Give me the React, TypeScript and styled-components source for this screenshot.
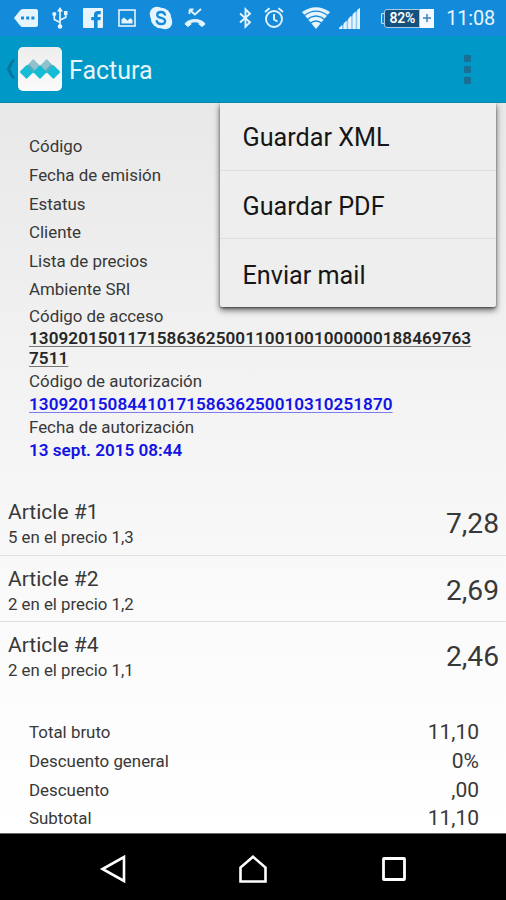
import React from 'react';
import styled, { createGlobalStyle } from 'styled-components';

const GlobalStyle = createGlobalStyle`
  *, *::before, *::after { box-sizing: border-box; }
  body { margin: 0; font-family: Roboto, "Liberation Sans", sans-serif; }
`;

const Screen = styled.div`
  width: 506px;
  height: 900px;
  display: flex;
  flex-direction: column;
  overflow: hidden;
  color: #383838;
`;

const StatusBar = styled.header`
  height: 36px;
  flex: none;
  display: flex;
  align-items: center;
  justify-content: space-between;
  padding: 0 11px 0 14px;
  background: #148bda;
`;

const StatusGroup = styled.div`
  display: flex;
  align-items: center;
`;

const Glyph = styled.svg<{ $gap?: number }>`
  display: block;
  flex: none;
  margin-left: ${({ $gap }) => $gap ?? 0}px;
  overflow: visible;
`;

const Battery = styled.div`
  display: flex;
  align-items: center;
  margin-left: 21px;
`;

const BatteryTip = styled.span`
  width: 3px;
  height: 11px;
  border: 1.5px solid #cfe6f8;
  border-right: 0;
  border-radius: 2px 0 0 2px;
`;

const BatteryLevel = styled.span`
  width: 36px;
  height: 19px;
  border: 1.5px solid #a9cbe6;
  border-radius: 3px 0 0 3px;
  background: #15517f;
  color: #fff;
  font-size: 14px;
  font-weight: 600;
  line-height: 16.5px;
  text-align: center;
  letter-spacing: -0.3px;
`;

const BatteryPlus = styled.span`
  width: 14px;
  height: 19px;
  display: grid;
  place-items: center;
  background: #f4faff;
`;

const Clock = styled.time`
  margin-left: 12px;
  padding-top: 2px;
  font-size: 19.9px;
  line-height: 34px;
  letter-spacing: -0.15px;
  color: #e9f4fc;
`;

const ActionBar = styled.div`
  height: 67px;
  flex: none;
  display: flex;
  align-items: center;
  padding: 0 35px 0 7px;
  background: #0098c6;
  border-bottom: 1px solid #0b86ab;
`;

const AppIcon = styled.div`
  width: 44px;
  height: 44px;
  margin-left: 2px;
  display: grid;
  place-items: center;
  border-radius: 5px;
  background: linear-gradient(#ededed, #fbfbfb);
`;

const Title = styled.h1`
  flex: 1;
  margin: 0 0 0 7px;
  padding-top: 3px;
  font-size: 25px;
  font-weight: 400;
  line-height: 40px;
  color: #e6f5fa;
`;

const Overflow = styled.div`
  width: 7px;
  display: flex;
  flex-direction: column;
  gap: 4px;
`;

const Dot = styled.span`
  height: 7px;
  border-radius: 1px;
  background: #1a6f95;
`;

const Body = styled.main`
  flex: 1;
  min-height: 0;
  position: relative;
  padding-top: 29.4px;
  background: linear-gradient(#e8e8e8 0%, #f1f1f1 32%, #fafafa 68%, #ffffff 100%);
`;

const Menu = styled.nav`
  position: absolute;
  top: 0;
  left: 220px;
  width: 275.5px;
  height: 204px;
  display: flex;
  flex-direction: column;
  background: #eeeeee;
  border-radius: 0 0 2px 2px;
  box-shadow: 0 3px 6px rgba(0, 0, 0, 0.62), 0 1px 2px rgba(0, 0, 0, 0.4);
  clip-path: inset(0 -14px -16px -14px);
`;

const MenuItem = styled.div`
  flex: 1;
  display: flex;
  align-items: center;
  padding: 3px 0 0 22.5px;
  font-size: 25.2px;
  color: #161616;
  & + & {
    padding-top: 4px;
    border-top: 1px solid #dfdfdf;
  }
`;

const Fields = styled.section`
  padding: 0 29px;
`;

const Row = styled.div`
  display: flex;
  align-items: center;
  justify-content: space-between;
  height: 28.6px;
`;

const Stack = styled.div`
  padding-top: 0.7px;
`;

const Label = styled.span<{ $stacked?: boolean }>`
  display: block;
  font-size: 16.9px;
  line-height: ${({ $stacked }) => ($stacked ? '23.5px' : '28.6px')};
`;

const Code = styled.div<{ $tone: string; $line?: string }>`
  margin: 1px 0 2px;
  font-size: 17.1px;
  font-weight: 600;
  line-height: 19.5px;
  letter-spacing: ${({ $line }) => ($line ? '0.06px' : '0')};
  color: ${({ $tone }) => $tone};
  text-decoration: ${({ $line }) => ($line ? `underline 1px ${$line}` : 'none')};
  text-underline-offset: 2px;
  text-decoration-skip-ink: none;
`;

const Articles = styled.section`
  margin-top: 27.9px;
`;

const Article = styled.article`
  height: 66.7px;
  display: flex;
  align-items: center;
  justify-content: space-between;
  padding: 5px 7px 0 8px;
  & + & {
    padding-top: 4px;
    border-top: 1px solid #e0e0e0;
  }
`;

const ArticleName = styled.div`
  padding-top: 1px;
  font-size: 21px;
  line-height: 26px;
`;

const ArticleDetail = styled.div`
  font-size: 16.8px;
  line-height: 25px;
`;

const Price = styled.div`
  font-size: 28.2px;
  line-height: 34px;
`;

const Totals = styled.section`
  margin-top: 30.3px;
  padding: 0 27px 0 29px;
`;

const Amount = styled.span`
  font-size: 21px;
  line-height: 28.6px;
`;

const NavBar = styled.footer`
  height: 67px;
  flex: none;
  display: flex;
  align-items: center;
  padding: 4px 0 0 100px;
  border-top: 1px solid #6a6a6a;
  background: #000;
`;

const fields = ['Código', 'Fecha de emisión', 'Estatus', 'Cliente', 'Lista de precios', 'Ambiente SRI'];

const articles = [
  { name: 'Article #1', detail: '5 en el precio 1,3', price: '7,28' },
  { name: 'Article #2', detail: '2 en el precio 1,2', price: '2,69' },
  { name: 'Article #4', detail: '2 en el precio 1,1', price: '2,46' },
];

const totals = [
  ['Total bruto', '11,10'],
  ['Descuento general', '0%'],
  ['Descuento', ',00'],
  ['Subtotal', '11,10'],
];

const ink = '#e6f4fd';

export default function App() {
  return (
    <Screen>
      <GlobalStyle />
      <StatusBar>
        <StatusGroup>
          <Glyph width="24" height="18" viewBox="0 0 24 18">
            <path d="M0 9 6 1.5Q7 0 9 0H22Q24 0 24 2V16Q24 18 22 18H9Q7 18 6 16.5Z" fill={ink} />
            <path d="M7 7.5h3v3H7zM12.200 7.500h3v3h-3zM17.400 7.500h3v3h-3z" fill="#148bda" />
          </Glyph>
          <Glyph $gap={14} width="16" height="22" viewBox="0 0 16 22">
            <g fill="none" stroke={ink} strokeWidth="1.7">
              <path d="M8 3v16M8 15.500 2.300 12.500V8M8 13l5.700-2.500V6" />
            </g>
            <path d="M8 0l3 4.500H5zM12 4h3.500v4H12z" fill={ink} />
            <circle cx="2.300" cy="7" r="2.100" fill={ink} />
            <circle cx="8" cy="19.500" r="2.300" fill={ink} />
          </Glyph>
          <Glyph $gap={15} width="20" height="20" viewBox="0 0 20 20">
            <rect width="20" height="20" rx="1" fill={ink} />
            <path d="M11 20V12.300H8.300V9H11V6.800Q11 3 15 3h2.800v3.200H16Q14.600 6.200 14.600 7.600V9h3.200l-.5 3.300h-2.700V20Z" fill="#148bda" />
          </Glyph>
          <Glyph $gap={15} width="18" height="18" viewBox="0 0 18 18">
            <rect x="1" y="1" width="16" height="16" fill="none" stroke={ink} strokeWidth="1.600" />
            <path d="M3.500 14.500V10.500L6 8.500l3.500 3L12.500 9l2 2v3.500Z" fill={ink} />
          </Glyph>
          <Glyph $gap={13} width="24" height="24" viewBox="0 0 24 24">
            <circle cx="8" cy="8" r="7.300" fill={ink} />
            <circle cx="16" cy="16" r="7.300" fill={ink} />
            <circle cx="12" cy="12" r="10.300" fill={ink} />
            <path d="M16 8.600C15.300 6.700 13.800 6 12 6 9.800 6 8.200 7.100 8.200 8.900c0 4 7.900 2 7.900 6 0 2-1.700 3.100-4.100 3.100-2.300 0-3.800-1-4.300-3" fill="none" stroke="#148bda" strokeWidth="2.300" strokeLinecap="round" />
          </Glyph>
          <Glyph $gap={11} width="22" height="20" viewBox="0 0 22 20">
            <path d="M5.500 1.500V6M5.500 1.500H9.500M6 2l4.800 4.500L17 1" fill="none" stroke={ink} strokeWidth="1.800" />
            <path d="M.9 15.800Q4.500 11.600 11 11.600T21.100 15.800L18.300 18.600 15.100 16.400V14.300Q11 13.300 6.900 14.300V16.400L3.700 18.600Z" fill={ink} stroke={ink} strokeWidth="1" strokeLinejoin="round" />
          </Glyph>
        </StatusGroup>
        <StatusGroup>
          <Glyph width="13" height="20" viewBox="0 0 13 20">
            <path d="M1 5.500 11 14.200 6.500 18.700V1.300L11 5.800 1 14.500" fill="none" stroke={ink} strokeWidth="1.900" />
          </Glyph>
          <Glyph $gap={12} width="20" height="22" viewBox="0 0 20 22">
            <g fill="none" stroke={ink} strokeWidth="1.900">
              <circle cx="10" cy="12" r="8" />
              <path d="M10 7v5.500l3.500 2M1 5l4.500-3.700M19 5l-4.500-3.700" />
            </g>
          </Glyph>
          <Glyph $gap={18} width="28" height="22" viewBox="0 0 28 22">
            <path d="M0 5Q14-4.500 28 5L14 22Z" fill={ink} />
            <path d="M2 8.800Q14-.5 26 8.800M5 12.600Q14 5.500 23 12.600M8 16.400Q14 11.500 20 16.400" fill="none" stroke="#148bda" strokeWidth="1.400" />
          </Glyph>
          <Glyph $gap={9} width="21" height="21" viewBox="0 0 21 21">
            <path d="M0 21 21 0V21Z" fill="#8cc5ef" />
            <path d="M0 21v-1l3-3v4ZM4.600 21v-5.600l3-3V21ZM9.200 21V10.800l3-3V21ZM13.700 21V6.300l3-3V21ZM18.200 21V1.800L21 0v21Z" fill={ink} />
          </Glyph>
          <Battery>
            <BatteryTip />
            <BatteryLevel>82%</BatteryLevel>
            <BatteryPlus>
              <svg width="8" height="8" viewBox="0 0 8 8">
                <path d="M4 0v8M0 4h8" stroke="#3583bd" strokeWidth="1.500" />
              </svg>
            </BatteryPlus>
          </Battery>
          <Clock>11:08</Clock>
        </StatusGroup>
      </StatusBar>

      <ActionBar>
        <Glyph width="9" height="20" viewBox="0 0 9 20">
          <path d="M7.500 1Q5.500 1.500 4.500 4L1.500 10l3 6q1 2.500 3 3" fill="none" stroke="#08749b" strokeWidth="2.800" />
        </Glyph>
        <AppIcon>
          <svg width="40" height="20" viewBox="0 0 40 20">
            <path d="M13.300 0 20.500 7.200 13.300 14.400 6.100 7.200ZM26.700 0 33.900 7.200 26.700 14.400 19.500 7.200Z" fill="#8fc0cd" />
            <path d="M6.600 6 13.600 13 6.600 20-.4 13ZM20 6 27 13 20 20 13 13ZM33.400 6 40.400 13 33.400 20 26.400 13Z" fill="#16bcd4" />
            <path d="M6.600 7.500 9.100 5.500 14.800 11.800 13.300 13.300 12 13ZM33.400 7.500 30.900 5.500 25.200 11.800 26.700 13.300 28 13Z" fill="#3fb0c5" />
          </svg>
        </AppIcon>
        <Title>Factura</Title>
        <Overflow>
          <Dot />
          <Dot />
          <Dot />
        </Overflow>
      </ActionBar>

      <Body>
        <Fields>
          {fields.map((field) => (
            <Row key={field}>
              <Label>{field}</Label>
            </Row>
          ))}
          <Stack>
            <Label $stacked>Código de acceso</Label>
            <Code $tone="#262626" $line="#777777">
              130920150117158636250011001001000000188469763
              <br />
              7511
            </Code>
            <Label $stacked>Código de autorización</Label>
            <Code $tone="#1212e6" $line="#7d7df0">1309201508441017158636250010310251870</Code>
            <Label $stacked>Fecha de autorización</Label>
            <Code $tone="#1212e6">13 sept. 2015 08:44</Code>
          </Stack>
        </Fields>

        <Articles>
          {articles.map(({ name, detail, price }) => (
            <Article key={name}>
              <div>
                <ArticleName>{name}</ArticleName>
                <ArticleDetail>{detail}</ArticleDetail>
              </div>
              <Price>{price}</Price>
            </Article>
          ))}
        </Articles>

        <Totals>
          {totals.map(([label, amount]) => (
            <Row key={label}>
              <Label>{label}</Label>
              <Amount>{amount}</Amount>
            </Row>
          ))}
        </Totals>

        <Menu>
          <MenuItem>Guardar XML</MenuItem>
          <MenuItem>Guardar PDF</MenuItem>
          <MenuItem>Enviar mail</MenuItem>
        </Menu>
      </Body>

      <NavBar>
        <Glyph width="26" height="28" viewBox="0 0 26 28">
          <path d="M24 2v24L2.500 14Z" fill="none" stroke="#fff" strokeWidth="2.600" />
        </Glyph>
        <Glyph $gap={113} width="28" height="28" viewBox="0 0 28 28">
          <path d="M1.500 26.500V12.500L14 1.800l12.500 10.700v14Z" fill="none" stroke="#fff" strokeWidth="2.600" />
        </Glyph>
        <Glyph $gap={115} width="24" height="24" viewBox="0 0 24 24">
          <rect x="1.500" y="1.500" width="21" height="21" rx="0.500" fill="none" stroke="#fff" strokeWidth="2.800" />
        </Glyph>
      </NavBar>
    </Screen>
  );
}
